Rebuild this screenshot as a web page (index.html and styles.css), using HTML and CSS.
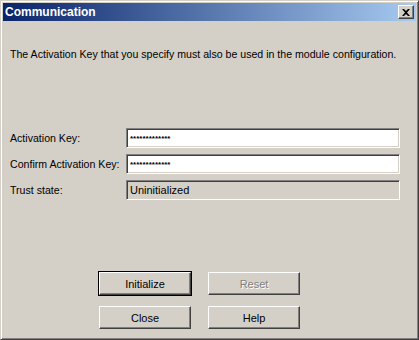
FILE: index.html
```html
<!DOCTYPE html>
<html lang="en">
<head>
    <meta charset="UTF-8">
    <title>Communication</title>
    <link rel="stylesheet" href="styles.css">
</head>
<body>
    <div class="window">
        <div class="titlebar">
            <span class="title">Communication</span>
            <button class="close-btn">
                <svg width="8" height="7" viewBox="0 0 8 7"><path d="M0 0h2l2 2 2-2h2L5 3.5 8 7H6L4 5 2 7H0l3-3.5z" fill="#000"/></svg>
            </button>
        </div>
        <div class="content">
            <p class="intro">The Activation Key that you specify must also be used in the module configuration.</p>
            <div class="form">
                <label>Activation Key:</label>
                <input type="text" class="field" value="*************">
                <label>Confirm Activation Key:</label>
                <input type="text" class="field" value="*************">
                <label>Trust state:</label>
                <div class="field readonly">Uninitialized</div>
            </div>
            <div class="buttons">
                <button class="btn default">Initialize</button>
                <button class="btn" disabled>Reset</button>
                <button class="btn">Close</button>
                <button class="btn">Help</button>
            </div>
        </div>
    </div>
</body>
</html>
```

FILE: styles.css
```css
body {
    margin: 0;
    font-family: "Liberation Sans", Arial, sans-serif;
    font-size: 11px;
    color: #000;
}
.window {
    width: 419px;
    height: 340px;
    box-sizing: border-box;
    background: #d4d0c8;
    border: 1px solid;
    border-color: #d4d0c8 #404040 #404040 #d4d0c8;
    box-shadow: inset 1px 1px #fff, inset -1px -1px #808080;
    padding: 2px;
    display: flex;
    flex-direction: column;
}
.titlebar {
    height: 18px;
    background: linear-gradient(to right, #0a246a, #a6caf0);
    display: flex;
    align-items: center;
    justify-content: space-between;
    padding: 0 2px 0 2px;
}
.title {
    color: #fff;
    font-weight: bold;
    font-size: 12px;
}
.close-btn {
    width: 16px;
    height: 14px;
    padding: 0;
    background: #d4d0c8;
    border: 1px solid;
    border-color: #fff #404040 #404040 #fff;
    box-shadow: inset -1px -1px #808080;
    display: flex;
    align-items: center;
    justify-content: center;
}
.content {
    padding: 0 16px 0 7px;
}
.intro {
    margin: 26px 0 0 0;
    line-height: 14px;
    font-size: 10.6px;
}
.form {
    display: grid;
    grid-template-columns: 116px 274px;
    row-gap: 6px;
    margin-top: 67px;
    align-items: center;
}
.form label {
    line-height: 20px;
    font-size: 10.6px;
}
.field {
    box-sizing: border-box;
    width: 274px;
    height: 20px;
    margin: 0;
    border: 1px solid;
    border-color: #808080 #fff #fff #808080;
    box-shadow: inset 1px 1px #404040, inset -1px -1px #d4d0c8;
    background: #fff;
    padding: 0 3px;
    font-family: "Liberation Sans", Arial, sans-serif;
    font-size: 8px;
    font-weight: bold;
    outline: none;
}
.readonly {
    background: #d4d0c8;
    font-size: 11px;
    font-weight: normal;
    line-height: 18px;
}
.buttons {
    display: grid;
    grid-template-columns: 92px 92px;
    column-gap: 17px;
    row-gap: 11px;
    margin: 72px 0 0 89px;
}
.btn {
    box-sizing: border-box;
    height: 23px;
    background: #d4d0c8;
    border: 1px solid;
    border-color: #fff #404040 #404040 #fff;
    box-shadow: inset -1px -1px #808080;
    font-family: "Liberation Sans", Arial, sans-serif;
    font-size: 11px;
    color: #000;
    padding: 0;
}
.btn.default {
    outline: 1px solid #000;
    outline-offset: 0;
}
.btn:disabled {
    color: #808080;
    text-shadow: 1px 1px #fff;
}
```
